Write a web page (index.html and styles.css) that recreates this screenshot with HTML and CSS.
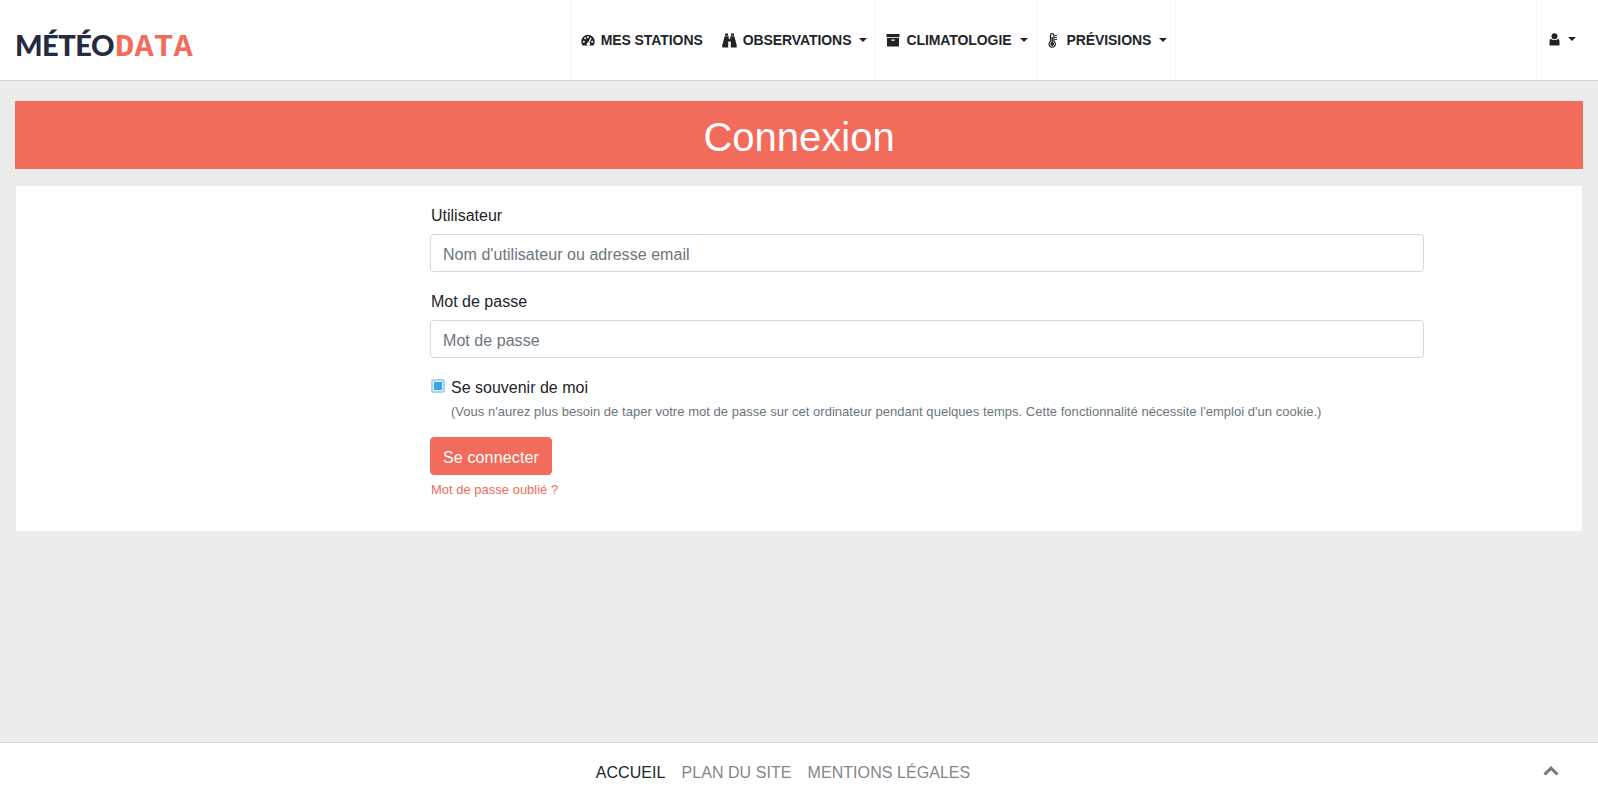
FILE: index.html
```html
<!DOCTYPE html>
<html lang="fr">
<head>
    <meta charset="UTF-8">
    <meta name="viewport" content="width=device-width, initial-scale=1.0">
    <title>Connexion</title>
    <link rel="stylesheet" href="styles.css">
</head>
<body>
    <header class="navbar">
        <a class="brand" href="#"><span class="brand-meteo">MÉTÉO</span><span class="brand-data">DATA</span></a>

        <nav class="menu">
            <a class="menu-item" href="#">
                <svg class="icon" width="14" height="14" viewBox="0 0 15 14"><path d="M7.500 1.500A7.200 7.200 0 0 0 .3 8.700c0 1.600.5 3 1.300 4.300h11.800c.8-1.300 1.300-2.700 1.300-4.300a7.200 7.200 0 0 0-7.200-7.200z"/><g fill="#fff"><circle cx="3" cy="8.800" r="1.100"/><circle cx="4.500" cy="5.200" r="1.100"/><circle cx="7.500" cy="3.900" r="1.100"/><circle cx="12" cy="8.800" r="1.100"/><path d="M10.200 4.200l1.200.6-2.300 5.200a1.800 1.800 0 1 1-1.500-.4z"/></g></svg>
                Mes stations
            </a>
            <a class="menu-item" href="#">
                <svg class="icon" width="15" height="15" viewBox="0 0 15 15"><path d="M3 .5h3v2.300H3zM9 .5h3v2.300H9zM2.600 3.300h4.100v2.400h1.600V3.300h4.100l2.300 9v2.200H8.800V8.500H6.200v6H.3v-2.200z"/></svg>
                Observations
                <span class="caret"></span>
            </a>
            <a class="menu-item" href="#">
                <svg class="icon" width="14" height="14" viewBox="0 0 14 14"><path d="M.5 1h13v3.200H.5z"/><path fill-rule="evenodd" d="M1 5h12v8.500H1zM5.300 6.600v1.200h3.400V6.600z"/></svg>
                Climatologie
                <span class="caret"></span>
            </a>
            <a class="menu-item" href="#">
                <svg class="icon icon-thermo" width="12" height="15" viewBox="0 0 12 15"><path fill="none" stroke="#222" stroke-width="1.200" d="M3.500 8.300V2.400a1.700 1.700 0 0 1 3.400 0v5.900a3.200 3.200 0 1 1-3.400 0z"/><circle cx="5.200" cy="11" r="1.900" fill="#222"/><path fill="#222" d="M4.500 4h1.400v6H4.500z"/><path stroke="#222" stroke-width=".9" d="M7.500 2.500h2.500M7.500 4.500h2.500M7.500 6.500h2.500"/></svg>
                Prévisions
                <span class="caret"></span>
            </a>
        </nav>

        <a class="user-item" href="#">
            <svg class="icon" width="11" height="13" viewBox="0 0 11 13"><circle cx="5.500" cy="3.300" r="3"/><path d="M1.800 5.800c1 1 2.300 1.300 3.700 1.300s2.700-.3 3.700-1.300c.9.300 1.300 1.500 1.300 3.400v2.300c0 .6-.4 1-1 1H1.500c-.6 0-1-.4-1-1V9.200c0-1.900.4-3.100 1.300-3.400z"/></svg>
            <span class="caret"></span>
        </a>
    </header>

    <main class="page">
        <h1 class="page-title">Connexion</h1>

        <section class="card">
            <form class="login-form" action="#" method="post">
                <div class="form-group">
                    <label for="username">Utilisateur</label>
                    <input class="form-control" type="text" id="username" placeholder="Nom d'utilisateur ou adresse email">
                </div>

                <div class="form-group">
                    <label for="password">Mot de passe</label>
                    <input class="form-control" type="password" id="password" placeholder="Mot de passe">
                </div>

                <div class="form-check">
                    <input class="check" type="checkbox" id="remember" checked>
                    <label for="remember">Se souvenir de moi</label>
                    <small class="hint">(Vous n'aurez plus besoin de taper votre mot de passe sur cet ordinateur pendant quelques temps. Cette fonctionnalité nécessite l'emploi d'un cookie.)</small>
                </div>

                <button class="btn" type="submit">Se connecter</button>
                <a class="forgot" href="#">Mot de passe oublié ?</a>
            </form>
        </section>
    </main>

    <footer class="footer">
        <nav class="footer-links">
            <a class="active" href="#">ACCUEIL</a>
            <a href="#">PLAN DU SITE</a>
            <a href="#">MENTIONS LÉGALES</a>
        </nav>
        <a class="to-top" href="#">
            <svg width="16" height="10" viewBox="0 0 16 10"><path fill="none" stroke="#777" stroke-width="3" d="M1.500 8.500L8 2.200l6.500 6.300"/></svg>
        </a>
    </footer>
</body>
</html>
```

FILE: styles.css
```css
* {
    box-sizing: border-box;
}

body {
    display: flex;
    flex-direction: column;
    min-height: 100vh;
    margin: 0;
    background: #ececec;
    color: #212529;
    font-family: "Liberation Sans", Arial, sans-serif;
    font-size: 16px;
    line-height: 1.5;
}

a {
    text-decoration: none;
}

/* Top bar */
.navbar {
    display: flex;
    height: 81px;
    background: #fff;
    border-bottom: 1px solid #d6d6d6;
}

.brand {
    display: flex;
    align-items: baseline;
    width: 210px;
    padding: 26px 0 0 15px;
    line-height: 38px;
}

.brand-meteo {
    color: #232a42;
    font-family: Lato, sans-serif;
    font-size: 29px;
    font-weight: 900;
    letter-spacing: -0.5px;
}

.brand-data {
    margin-left: 1px;
    color: #f36b5a;
    font-family: "Liberation Mono", monospace;
    font-size: 32px;
    font-weight: 700;
    letter-spacing: 0.3px;
}

.menu {
    display: flex;
    flex: 1;
    justify-content: center;
}

.menu-item {
    display: flex;
    align-items: center;
    padding: 0 8px 0 10px;
    border-left: 1px solid #f4f4f4;
    color: #212529;
    font-size: 14px;
    font-weight: 700;
    letter-spacing: -0.08px;
    text-transform: uppercase;
}

.menu-item:first-child {
    padding-right: 9px;
}

.menu-item:first-child + .menu-item {
    border-left: none;
}

.menu-item:last-child {
    border-right: 1px solid #f4f4f4;
}

.icon {
    flex: none;
    margin-right: 6px;
    fill: #222;
}

.icon-thermo {
    margin-right: 8px;
}

.caret {
    flex: none;
    width: 0;
    height: 0;
    margin-left: 8px;
    border-top: 4px solid #222;
    border-left: 4px solid transparent;
    border-right: 4px solid transparent;
}

.user-item {
    display: flex;
    align-items: center;
    width: 62px;
    padding: 0 0 2px 12px;
    border-left: 1px solid #f4f4f4;
}

.user-item .caret {
    margin-left: 2px;
}

/* Main content */
.page {
    padding: 20px 15px 0;
}

.page-title {
    height: 68px;
    margin: 0 0 17px;
    background: #f36b5a;
    color: #fff;
    font-size: 40px;
    font-weight: 400;
    line-height: 73px;
    text-align: center;
}

.card {
    height: 345px;
    margin: 0 1px;
    padding: 16px 0 0 414px;
    background: #fff;
}

.login-form {
    width: 994px;
}

.form-group {
    margin-bottom: 16px;
}

.form-group label {
    display: block;
    height: 24px;
    margin-bottom: 8px;
    padding: 2px 0 0 1px;
}

.form-control {
    display: block;
    width: 100%;
    height: 38px;
    padding: 8px 12px 4px;
    border: 1px solid #d5d8de;
    border-radius: 4px;
    color: #495057;
    font-family: inherit;
    font-size: 16px;
    letter-spacing: 0.05px;
}

.form-control::placeholder {
    color: #6c757d;
    opacity: 1;
}

.form-check {
    position: relative;
    height: 47px;
    margin-bottom: 16px;
    padding: 2px 0 0 21px;
}

.check {
    position: absolute;
    top: 5px;
    left: 1px;
    width: 14px;
    height: 14px;
    margin: 0;
    border: 2px solid #a5d6f1;
    border-radius: 3px;
    box-shadow: inset 0 0 0 1px #eef7fc;
    appearance: none;
}

.check:checked {
    background: #35a7e6;
}

.hint {
    display: block;
    margin-top: 3px;
    color: #6c757d;
    font-size: 13px;
    letter-spacing: 0.03px;
    line-height: 18px;
}

.btn {
    display: block;
    width: 122px;
    height: 38px;
    padding: 8px 0 4px;
    border: 1px solid #f36b5a;
    border-radius: 4px;
    background: #f36b5a;
    color: #fff;
    font-family: inherit;
    font-size: 16px;
    letter-spacing: 0.15px;
}

.forgot {
    display: block;
    margin-top: 6px;
    padding-left: 1px;
    color: #f36b5a;
    font-size: 13px;
    line-height: 18px;
}

/* Footer */
.footer {
    position: relative;
    display: flex;
    justify-content: center;
    align-items: center;
    height: 57px;
    margin-top: auto;
    padding: 0 32px 0 0;
    background: #fff;
    border-top: 1px solid #d6d6d6;
}

.footer-links {
    display: flex;
    gap: 16px;
    margin-top: 3px;
    letter-spacing: 0.06px;
}

.footer-links a {
    color: #868686;
}

.footer-links a.active {
    color: #212529;
}

.to-top {
    position: absolute;
    top: 23px;
    right: 39px;
    display: flex;
}
```
